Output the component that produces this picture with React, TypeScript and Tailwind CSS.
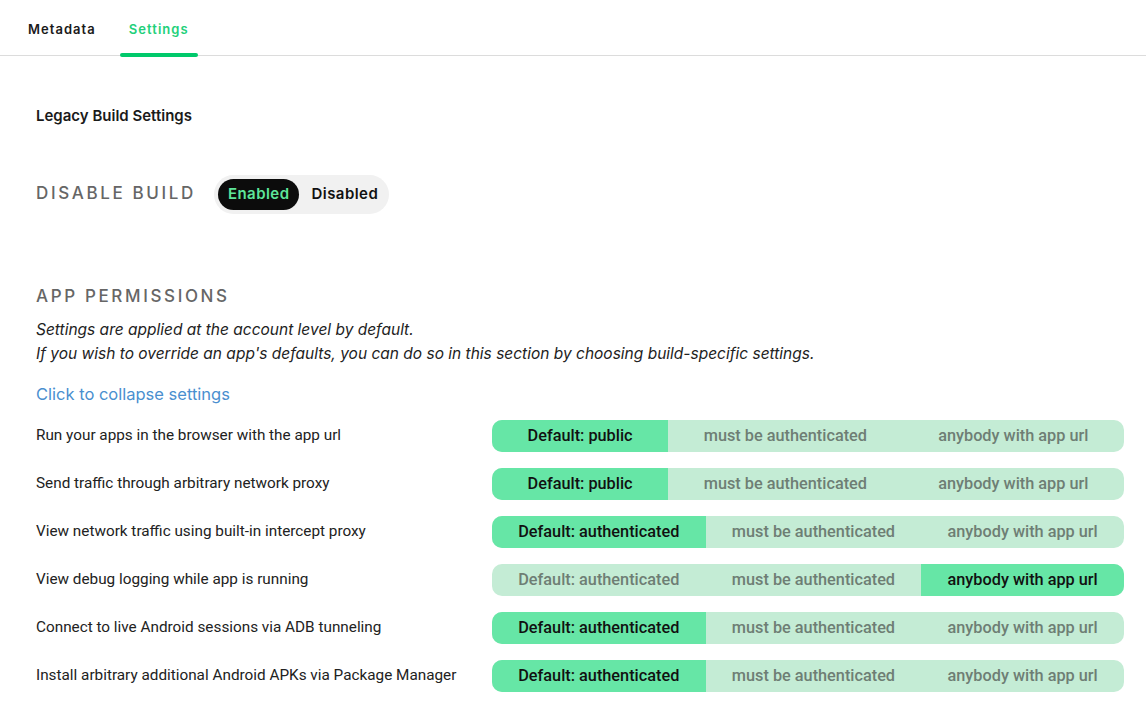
import React, { useState } from "react";

interface Permiso {
  label: string;
  defaultLabel: string;
  selected: number; // 0 = default, 1 = auth, 2 = anybody
}

const permisos: Permiso[] = [
  { label: "Run your apps in the browser with the app url", defaultLabel: "Default: public", selected: 0 },
  { label: "Send traffic through arbitrary network proxy", defaultLabel: "Default: public", selected: 0 },
  { label: "View network traffic using built-in intercept proxy", defaultLabel: "Default: authenticated", selected: 0 },
  { label: "View debug logging while app is running", defaultLabel: "Default: authenticated", selected: 2 },
  { label: "Connect to live Android sessions via ADB tunneling", defaultLabel: "Default: authenticated", selected: 0 },
  { label: "Install arbitrary additional Android APKs via Package Manager", defaultLabel: "Default: authenticated", selected: 0 },
];

const App: React.FC = () => {
  const [tab, setTab] = useState("settings");
  const [enabled, setEnabled] = useState(true);
  const [rows, setRows] = useState(permisos);

  const pick = (i: number, j: number) => {
    setRows(rows.map((r, k) => (k === i ? { ...r, selected: j } : r)));
  };

  return (
    <div className="min-h-screen bg-white text-[#1a1a1a] font-['Inter',sans-serif]">
      {/* tabs */}
      <div className="flex h-[56px] border-b border-[#dcdcdc] pl-[19px]">
        {[
          { id: "metadata", name: "Metadata" },
          { id: "settings", name: "Settings" },
        ].map((t) => (
          <button
            key={t.id}
            onClick={() => setTab(t.id)}
            className={`relative mr-[15px] px-[9px] text-[13px] font-semibold tracking-[0.08em] ${
              tab === t.id ? "text-[#22d07a]" : "text-[#1a1a1a]"
            }`}
          >
            <span className="relative top-[2px]">{t.name}</span>
            {tab === t.id && (
              <span className="absolute bottom-[-2px] left-0 right-0 h-[4px] rounded-full bg-[#00c96b]" />
            )}
          </button>
        ))}
      </div>

      <div className="pl-[36px] pr-[22px]">
        <h2 className="mt-[49px] text-[15px] font-semibold">Legacy Build Settings</h2>

        <div className="mt-[47px] flex items-center gap-[18px]">
          <span className="text-[17px] font-medium uppercase tracking-[0.155em] text-[#666]">Disable build</span>
          <div className="flex items-center rounded-full bg-[#f1f1f1] py-[4px] pl-[4px]">
            <button
              onClick={() => setEnabled(true)}
              className={`h-[31px] rounded-full px-[10px] text-[15px] font-semibold tracking-[0.03em] ${
                enabled ? "bg-[#0c0c0c] text-[#5ee59a]" : "text-[#111]"
              }`}
            >
              Enabled
            </button>
            <button
              onClick={() => setEnabled(false)}
              className={`h-[31px] rounded-full pl-[12px] pr-[11px] text-[15px] font-semibold tracking-[0.03em] ${
                !enabled ? "bg-[#0c0c0c] text-[#5ee59a]" : "text-[#111]"
              }`}
            >
              Disabled
            </button>
          </div>
        </div>

        <h3 className="mt-[70px] text-[17px] font-medium uppercase tracking-[0.155em] text-[#666]">App permissions</h3>
        <p className="mt-[9px] text-[15.5px] italic leading-[24px] text-[#222]">
          Settings are applied at the account level by default.
          <br />
          If you wish to override an app's defaults, you can do so in this section by choosing build-specific settings.
        </p>
        <button className="mt-[16px] text-[16.5px] text-[#4a8fcf]">Click to collapse settings</button>

        <div className="mt-[13px] flex flex-col gap-[16px] font-['Roboto',sans-serif]">
          {rows.map((r, i) => (
            <div key={r.label} className="flex items-center">
              <span className="w-[456px] text-[15.3px] text-[#222]">{r.label}</span>
              <div className="flex h-[32px] flex-1 overflow-hidden rounded-[10px] bg-[#c4ecd5]">
                {[r.defaultLabel, "must be authenticated", "anybody with app url"].map((opt, j) => (
                  <button
                    key={opt}
                    onClick={() => pick(i, j)}
                    className={`flex-auto whitespace-nowrap text-[16.3px] font-medium ${
                      r.selected === j ? "bg-[#66e6a6] text-[#111]" : "text-[#6e7e74]"
                    }`}
                  >
                    {opt}
                  </button>
                ))}
              </div>
            </div>
          ))}
        </div>
      </div>
    </div>
  );
};

export default App;
